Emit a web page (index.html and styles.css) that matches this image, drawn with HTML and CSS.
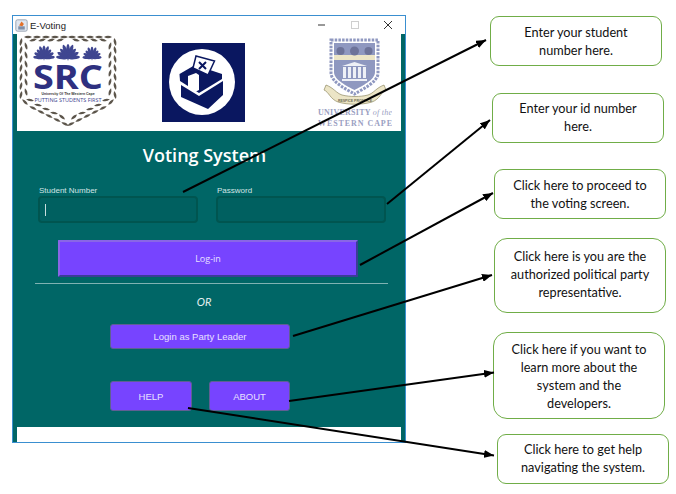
FILE: index.html
```html
<!DOCTYPE html>
<html lang="en">
<head>
<meta charset="utf-8">
<title>E-Voting</title>
<link rel="stylesheet" href="styles.css">
</head>
<body>
<div class="canvas">
  <section class="window">
    <header class="titlebar">
      <svg class="app-icon" width="13" height="13" viewBox="0 0 16 16">
        <rect x="1" y="1" width="14" height="14" rx="2" fill="#dfe6ef" stroke="#8b98a8"/>
        <rect x="4" y="9" width="8" height="4" fill="#7f8fa8"/>
        <path d="M5 8l3-5 3 3-2 3z" fill="#e2702a"/>
      </svg>
      <span class="app-title">E-Voting</span>
      <div class="win-controls">
        <svg width="10" height="10" viewBox="0 0 10 10"><path d="M1 5h7" stroke="#333" stroke-width="1"/></svg>
        <svg width="10" height="10" viewBox="0 0 10 10"><rect x="1.5" y="1.5" width="7" height="7" fill="none" stroke="#cfcfcf"/></svg>
        <svg width="10" height="10" viewBox="0 0 10 10"><path d="M1 1l8 8M9 1l-8 8" stroke="#333" stroke-width="1"/></svg>
      </div>
    </header>
    <main class="panel">
      <div class="banner">
        <svg class="logo-src" width="102" height="93" viewBox="0 0 102 93">
          <defs>
            <path id="leaf" d="M-4 0Q0 -2.600 4 0Q0 2.600 -4 0z"/>
            <g id="half">
              <use href="#leaf" transform="translate(3 60) rotate(-78)"/>
              <use href="#leaf" transform="translate(3 51) rotate(-78)"/>
              <use href="#leaf" transform="translate(3 42) rotate(-78)"/>
              <use href="#leaf" transform="translate(3 33) rotate(-78)"/>
              <use href="#leaf" transform="translate(3 24) rotate(-78)"/>
              <use href="#leaf" transform="translate(3 15) rotate(-78)"/>
              <use href="#leaf" transform="translate(3 7) rotate(-78)"/>
              <use href="#leaf" transform="translate(8 57) rotate(-105)"/>
              <use href="#leaf" transform="translate(8 47) rotate(-105)"/>
              <use href="#leaf" transform="translate(8 38) rotate(-105)"/>
              <use href="#leaf" transform="translate(8 29) rotate(-105)"/>
              <use href="#leaf" transform="translate(8 20) rotate(-105)"/>
              <use href="#leaf" transform="translate(8 11) rotate(-105)"/>
              <use href="#leaf" transform="translate(47 89) rotate(25)"/>
              <use href="#leaf" transform="translate(39 85) rotate(25)"/>
              <use href="#leaf" transform="translate(31 81) rotate(25)"/>
              <use href="#leaf" transform="translate(23 77) rotate(25)"/>
              <use href="#leaf" transform="translate(15 73) rotate(25)"/>
              <use href="#leaf" transform="translate(7 67) rotate(45)"/>
              <use href="#leaf" transform="translate(44 82) rotate(40)"/>
              <use href="#leaf" transform="translate(36 78) rotate(10)"/>
              <use href="#leaf" transform="translate(28 74) rotate(10)"/>
              <use href="#leaf" transform="translate(20 70) rotate(10)"/>
              <use href="#leaf" transform="translate(12 65) rotate(10)"/>
              <use href="#leaf" transform="translate(46 2)"/>
              <use href="#leaf" transform="translate(37 2)"/>
              <use href="#leaf" transform="translate(28 2)"/>
              <use href="#leaf" transform="translate(19 2)"/>
              <use href="#leaf" transform="translate(10 2)"/>
              <use href="#leaf" transform="translate(42 5) rotate(-15)"/>
              <use href="#leaf" transform="translate(33 5) rotate(-15)"/>
              <use href="#leaf" transform="translate(24 5) rotate(-15)"/>
              <use href="#leaf" transform="translate(15 5) rotate(-15)"/>
            </g>
            <g id="flower">
              <ellipse cx="0" cy="-6" rx="1.900" ry="6" transform="rotate(-85)"/>
              <ellipse cx="0" cy="-6" rx="1.900" ry="6" transform="rotate(-62)"/>
              <ellipse cx="0" cy="-6" rx="1.900" ry="6" transform="rotate(-40)"/>
              <ellipse cx="0" cy="-7" rx="1.900" ry="7" transform="rotate(-20)"/>
              <ellipse cx="0" cy="-7" rx="1.900" ry="7"/>
              <ellipse cx="0" cy="-7" rx="1.900" ry="7" transform="rotate(20)"/>
              <ellipse cx="0" cy="-6" rx="1.900" ry="6" transform="rotate(40)"/>
              <ellipse cx="0" cy="-6" rx="1.900" ry="6" transform="rotate(62)"/>
              <ellipse cx="0" cy="-6" rx="1.900" ry="6" transform="rotate(85)"/>
              <path d="M-1 0h2l-1 3z"/>
            </g>
          </defs>
          <g fill="#5c554b">
            <use href="#half"/>
            <use href="#half" transform="translate(100 0) scale(-1 1)"/>
          </g>
          <g fill="#3f4690">
            <use href="#flower" transform="translate(26 23) scale(.9)"/>
            <use href="#flower" transform="translate(50 23)"/>
            <use href="#flower" transform="translate(74 23) scale(.8)"/>
          </g>
          <text class="src-main" x="50" y="54" text-anchor="middle" textLength="70" lengthAdjust="spacingAndGlyphs">SRC</text>
          <text class="src-small" x="50" y="60" text-anchor="middle">University Of The Western Cape</text>
          <text class="src-tag" x="50" y="67" text-anchor="middle" textLength="67" lengthAdjust="spacingAndGlyphs">PUTTING STUDENTS FIRST</text>
        </svg>
        <svg class="logo-ballot" width="83" height="79" viewBox="0 0 83 79">
          <rect width="83" height="79" fill="#0a1760"/>
          <circle cx="40" cy="39" r="33" fill="#fff"/>
          <path d="M17.500 31L33 22L60 31V36L37 50L18 38z" fill="#0a1760"/>
          <path d="M19 42L37 53L61 38V52L46 66L19 54z" fill="#0a1760"/>
          <path d="M34 13L52.500 18L46 32L31 25z" fill="#fff" stroke="#0a1760" stroke-width="1.500"/>
          <path d="M37 19l7 7M44 19l-7 7" stroke="#0a1760" stroke-width="2"/>
          <path d="M26 33L34 30L37 32V47L33 49L26 45z" fill="#fff"/>
        </svg>
        <svg class="logo-uwc" width="76" height="93" viewBox="0 0 76 93">
          <path class="uwc-wreath" d="M15 5H62V38C62 47 47 54 38.500 59C30 54 15 47 15 38Z"/>
          <path d="M18 8H59V37C59 45 46 51 38.500 55C31 51 18 45 18 37Z" fill="#8f98c0"/>
          <rect x="18" y="20" width="41" height="5" fill="#ece5c6"/>
          <g fill="#6d7399">
            <circle cx="24.500" cy="16" r="4"/><circle cx="38.500" cy="16" r="4.500"/><circle cx="52.500" cy="16" r="4"/>
          </g>
          <path d="M26 31l12.500-4 12.500 4zM26 46h25v-2H26zM27 32h3v11h-3zM32 32h3v11h-3zM37 32h3v11h-3zM42 32h3v11h-3zM47 32h3v11h-3z" fill="#eef0f6"/>
          <path class="uwc-scroll" d="M10 50c8 3 10 8 16 10 8 2 18 2 26 0 6-2 8-7 16-10l2 5c-5 2-6 9-14 12-10 3-24 3-34 0-8-3-9-10-14-12z"/>
          <text class="uwc-motto" x="39" y="66.500" text-anchor="middle" textLength="34">RESPICE PROSPICE</text>
          <text class="uwc-line" x="39" y="80" text-anchor="middle" textLength="74">UNIVERSITY <tspan class="uwc-of">of the</tspan></text>
          <text class="uwc-line" x="39" y="91" text-anchor="middle" textLength="74">WESTERN CAPE</text>
        </svg>
      </div>
      <h1 class="heading">Voting System</h1>
      <div class="fields">
        <label class="field field-student">
          <span class="field-label">Student Number</span>
          <span class="field-input"><span class="caret"></span></span>
        </label>
        <label class="field field-password">
          <span class="field-label">Password</span>
          <span class="field-input"></span>
        </label>
      </div>
      <button class="btn btn-login">Log-in</button>
      <hr class="divider">
      <p class="or">OR</p>
      <button class="btn btn-party">Login as Party Leader</button>
      <div class="btn-row">
        <button class="btn btn-help">HELP</button>
        <button class="btn btn-about">ABOUT</button>
      </div>
      <div class="footer-strip"></div>
    </main>
  </section>

  <div class="note note-1">Enter your student<br>number here.</div>
  <div class="note note-2">Enter your id number<br>here.</div>
  <div class="note note-3">Click here to proceed to<br>the voting screen.</div>
  <div class="note note-4">Click here is you are the<br>authorized political party<br>representative.</div>
  <div class="note note-5">Click here if you want to<br>learn more about the<br>system and the<br>developers.</div>
  <div class="note note-6">Click here to get help<br>navigating the system.</div>

  <svg class="arrows" width="676" height="494" viewBox="0 0 676 494">
    <defs>
      <marker id="head" markerUnits="userSpaceOnUse" markerWidth="10" markerHeight="8" refX="10" refY="4" orient="auto">
        <path d="M0 0L10 4L0 8z" fill="#000"/>
      </marker>
    </defs>
    <g class="arrow-lines">
      <line x1="183" y1="192" x2="486" y2="40" marker-end="url(#head)"/>
      <line x1="387" y1="204" x2="490" y2="120" marker-end="url(#head)"/>
      <line x1="360" y1="265" x2="493" y2="193" marker-end="url(#head)"/>
      <line x1="293" y1="336" x2="492" y2="275" marker-end="url(#head)"/>
      <line x1="289" y1="401" x2="494" y2="372.500" marker-end="url(#head)"/>
      <line x1="188" y1="408" x2="494" y2="455.500" marker-end="url(#head)"/>
    </g>
  </svg>
</div>
</body>
</html>
```
FILE: styles.css
```css
* { box-sizing: border-box; }
html, body { margin: 0; padding: 0; background: #fff; }
.canvas { position: relative; width: 676px; height: 494px; overflow: hidden; }

.window {
  position: absolute; left: 12px; top: 15px; width: 394px; height: 428px;
  border: 1px solid #3a8fd0; background: #fff;
  display: flex; flex-direction: column;
}
.titlebar { height: 18px; flex: none; display: flex; align-items: center; padding-left: 2px; background: #fff; }
.app-icon { flex: none; }
.app-title { margin-left: 2px; font: 9.500px "Liberation Sans", sans-serif; color: #222; }
.win-controls { margin-left: auto; display: flex; gap: 23px; padding-right: 12px; }

.panel {
  flex: 1; background: #006666; padding: 0 4px;
  display: flex; flex-direction: column; align-items: flex-start;
}
.banner {
  width: 384px; height: 97px; background: #fff; flex: none;
  display: flex; align-items: flex-start;
}
.logo-src { margin: 1px 0 0 1px; flex: none; }
.logo-ballot { margin: 9px 0 0 42px; flex: none; }
.logo-uwc { margin: 1px 0 0 71px; flex: none; }
.src-main { font: 700 34px "Open Sans", sans-serif; fill: #2e3080; }
.src-small { font: 700 3.500px "Liberation Sans", sans-serif; fill: #333; }
.src-tag { font: 5.500px "Open Sans", sans-serif; fill: #3f4690; }
.uwc-wreath { fill: #fff; stroke: #8f98c0; stroke-width: 3; stroke-dasharray: 2.500 1.200; }
.uwc-scroll { fill: #ece5c6; stroke: #8f8a63; stroke-width: .7; }
.uwc-motto { font: 700 3.500px "Liberation Sans", sans-serif; fill: #6f6c55; }
.uwc-line { font: 700 8px "Liberation Serif", serif; fill: #9aa0c2; }
.uwc-of { font-style: italic; font-weight: 400; }

.heading {
  width: 100%; margin: 12px 0 0; padding-right: 9px; text-align: center; height: 24px;
  font: 600 18px/24px "Open Sans", sans-serif; color: #fff;
}
.fields { display: flex; gap: 18px; margin: 19px 0 0 21px; }
.field { display: flex; flex-direction: column; }
.field-student { width: 160px; }
.field-password { width: 170px; }
.field-label { height: 10px; padding-left: 1px; font: 8px/10px "Liberation Sans", sans-serif; color: #d3e4e4; }
.field-input {
  height: 27px; background: #006060; border: 2px solid #005550; border-radius: 4px;
  display: flex; align-items: center; padding-left: 5px;
}
.caret { width: 1px; height: 12px; background: #c9dede; }

.btn {
  display: block; background: #7744ff; color: #e8e0ff; padding: 0; cursor: pointer;
  border: 1px solid #5f5f93; border-radius: 3px;
  font: 9.500px "Liberation Sans", sans-serif;
}
.btn-login {
  width: 300px; height: 37px; margin: 17px 0 0 41px; border: 2px solid;
  border-color: #8a66e6 #3b3d96 #3b3d96 #8a66e6; border-radius: 1px;
  font: 9px "Open Sans", sans-serif;
}
.divider { width: 353px; height: 1px; margin: 6px 0 0 18px; border: 0; background: #7fb2b2; }
.or { width: 100%; margin: 10px 0 0; padding-right: 10px; height: 16px; text-align: center; font: italic 11px/16px "Lato", sans-serif; color: #e4f0f0; }
.btn-party { width: 180px; height: 25px; margin: 14px 0 0 93px; }
.btn-row { display: flex; gap: 17px; margin: 32px 0 0 93px; }
.btn-help { width: 82px; height: 30px; }
.btn-about { width: 81px; height: 30px; }
.footer-strip { width: 384px; height: 15px; margin-top: 16px; background: #fff; flex: none; }

.note {
  position: absolute; width: 172px; display: flex; align-items: center; justify-content: center;
  text-align: center; background: #fff; border: 1px solid #70ad47; border-radius: 9px;
  font: 12.700px/18px "Lato", sans-serif; color: #111;
}
.note-1 { left: 490px; top: 16px; height: 50px; }
.note-2 { left: 492px; top: 93px; height: 50px; align-items: flex-start; padding-top: 5px; }
.note-3 { left: 494px; top: 169px; height: 50px; padding-bottom: 1px; }
.note-4 { left: 494px; top: 238px; height: 75px; border-radius: 13px; padding-bottom: 4px; }
.note-5 { left: 493px; top: 332px; height: 87px; border-radius: 14px; }
.note-6 { left: 497px; top: 434px; height: 50px; padding-bottom: 3px; }

.arrows { position: absolute; left: 0; top: 0; pointer-events: none; }
.arrow-lines line { stroke: #000; stroke-width: 2; }
```
